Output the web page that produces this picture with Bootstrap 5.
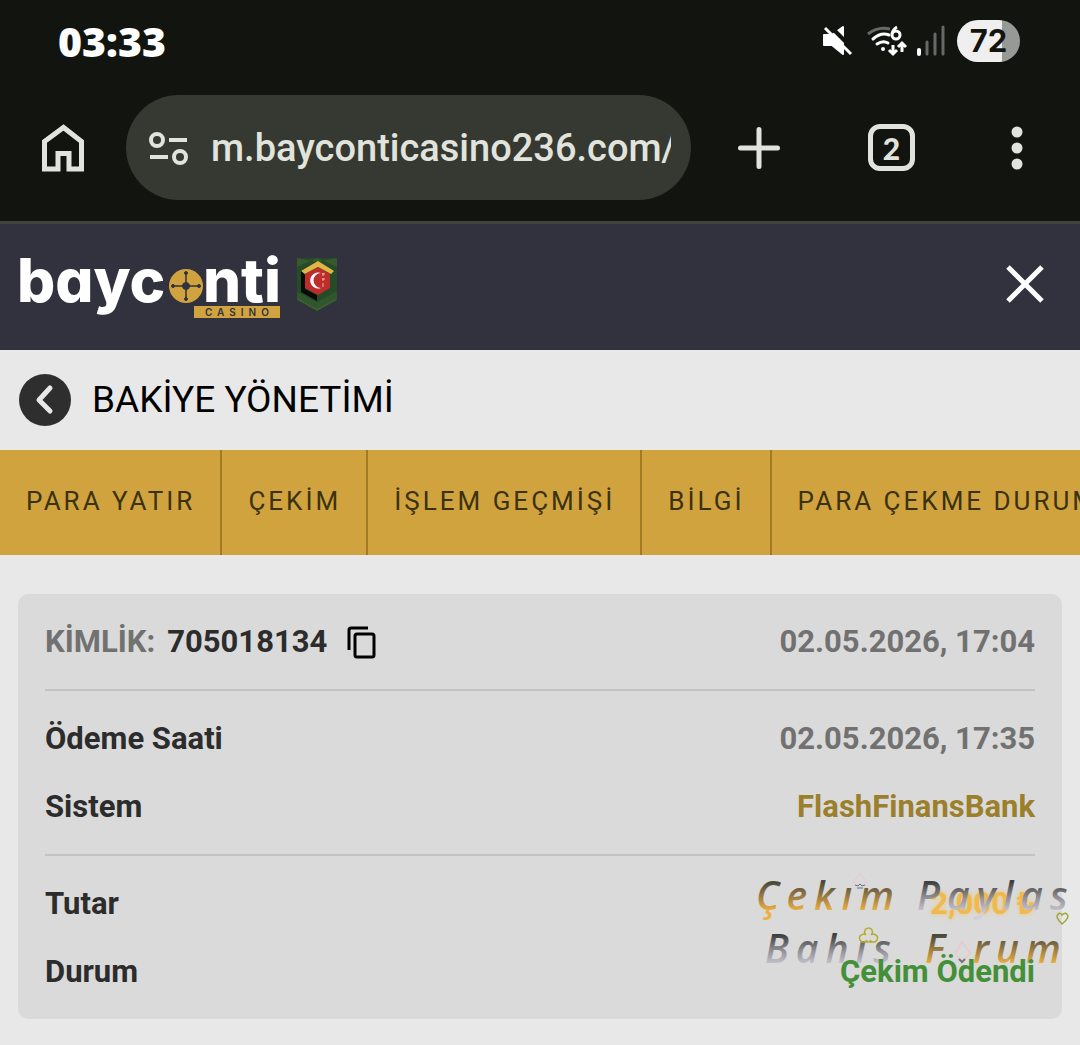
<!DOCTYPE html>
<html lang="tr">
<head>
<meta charset="utf-8">
<meta name="viewport" content="width=device-width, initial-scale=1">
<title>Bakiye Yönetimi</title>
<link href="https://cdn.jsdelivr.net/npm/bootstrap@5.3.0/dist/css/bootstrap.min.css" rel="stylesheet">
<style>
body { background: #e8e8e8; font-family: Roboto, "Noto Sans", sans-serif; color: #2c2c2c; overflow-x: hidden; }
svg { display: block; flex: none; }
.phone-top { background: #12150f; color: #e1e4dc; border-bottom: 3px solid #41433f; }
.status-line { height: 82px; padding: 0 60px 0 58px; color: #fff; }
.clock { font: 800 41px/48px "Open Sans", sans-serif; }
.battery { width: 63px; height: 42px; border-radius: 21px; background: linear-gradient(90deg, #efefef 72%, #979996 72%); color: #12150f; font: 700 31px/42px Inter, sans-serif; }
.browser-bar { padding: 13px 57px 21px 41px; }
.browser-bar .btn { flex: none; }
.address { height: 105px; border-radius: 53px; background: #363832; padding: 0 20px 0 22px; gap: 23px; margin: 0 46px 0 40px; min-width: 0; }
.address input { min-width: 0; flex: 1; background: none; border: 0; padding: 0; color: #e1e4dc; font-size: 38px; line-height: 48px; font-weight: 500; outline: 0; }
.tab-count, .tab-count:hover { width: 47px; height: 47px; border: 5px solid #e1e4dc; border-radius: 12px; color: #e1e4dc; font: 900 30px/36px Lato, sans-serif; margin: 0 96px 0 87px; }
.site-head { background: #31323e; height: 126px; padding: 0 36px 6px 15px; color: #fff; }
.page-title { height: 100px; padding: 0 19px; gap: 21px; }
.page-title h1 { font-size: 37px; line-height: 44px; font-weight: 400; color: #000; }
.money-tabs { background: #d1a33e; height: 105px; overflow: hidden; }
.money-tabs .nav-link { display: flex; align-items: center; white-space: nowrap; padding: 0 25px 3px 26px; border-right: 2px solid #a37a22; border-radius: 0; color: #3a3211; font-size: 26px; line-height: 32px; letter-spacing: 3px; }
.pay-card { margin: 39px 18px 26px; background: #dadada; border: 0; border-radius: 10px; padding: 0 27px; font-size: 31px; line-height: 36px; font-weight: 700; }
.pay-part { padding: 14px 0 13px; }
.pay-part + .pay-part { border-top: 2px solid #c3c3c3; }
.pay-line { height: 68px; }
.copy-btn { margin-left: 20px; }
.dim { color: #717171; }
.system-name { color: #9b7f2b; }
.amount { color: #efb94e; text-shadow: 0 0 4px #f2c766; }
.paid { color: #449039; }
.stamp { position: absolute; top: 277px; right: -18px; pointer-events: none; }
</style>
<script src="https://cdn.jsdelivr.net/npm/bootstrap@5.3.0/dist/js/bootstrap.bundle.min.js"></script>
</head>
<body>
<header class="phone-top">
  <div class="status-line d-flex align-items-center justify-content-between">
    <span class="clock">03:33</span>
    <div class="d-flex align-items-center">
      <svg width="135" height="42" viewBox="818 20 135 42" fill="none" aria-hidden="true">
        <path d="M824 35h8l11-8v27l-11-9h-8z" fill="#fff" stroke="#fff" stroke-width="2" stroke-linejoin="round"/>
        <path d="M828 24l26 26" stroke="#12150f" stroke-width="4"/>
        <path d="M825 28l26 26" stroke="#fff" stroke-width="3"/>
        <path d="M868 34q10-8 22-5" stroke="#666965" stroke-width="3"/>
        <path d="M873 39q8-7 16-4M877 44q6-4 11-1" stroke="#fff" stroke-width="3" stroke-linecap="round"/>
        <circle cx="883" cy="49" r="2" fill="#fff"/>
        <circle cx="896" cy="35" r="4" stroke="#fff" stroke-width="3"/>
        <path d="M892 34q1-5 5-7" stroke="#fff" stroke-width="3"/>
        <path d="M893 45v9m-4-4 4 4 4-4M902 52v-9m-4 4 4-4 4 4" stroke="#fff" stroke-width="3"/>
        <path d="M919 50v4" stroke="#fff" stroke-width="4" stroke-linecap="round"/>
        <path d="M927 42v12M935 34v20M943 27v27" stroke="#666965" stroke-width="3" stroke-linecap="round"/>
      </svg>
      <span class="battery text-center ms-1">72</span>
    </div>
  </div>
  <div class="browser-bar d-flex align-items-center">
    <button class="btn p-0 border-0" aria-label="Ana sayfa"><svg width="45" height="48" viewBox="0 0 45 48" fill="none" stroke="#e1e4dc" stroke-width="5"><path d="M3.500 45V17.500L22.500 3.500l18 14V45H28V29.500H17V45z"/></svg></button>
    <div class="address d-flex align-items-center flex-grow-1">
      <svg width="40" height="36" viewBox="0 0 40 36" fill="none" stroke="#e1e4dc" stroke-width="4"><circle cx="9" cy="10" r="6"/><path d="M21 10h18M2 27h18"/><circle cx="32" cy="27" r="6"/></svg>
      <input type="text" aria-label="Adres" value="m.bayconticasino236.com/" spellcheck="false">
    </div>
    <button class="btn p-0 border-0" aria-label="Yeni sekme"><svg width="44" height="44" viewBox="0 0 44 44" stroke="#e1e4dc" stroke-width="5" stroke-linecap="round"><path d="M22 3.500v37M3.500 22h37"/></svg></button>
    <button class="btn p-0 tab-count" aria-label="Sekmeler">2</button>
    <button class="btn p-0 border-0" aria-label="Menü"><svg width="12" height="44" viewBox="0 0 12 44" fill="#e1e4dc"><circle cx="6" cy="6" r="5.500"/><circle cx="6" cy="22" r="5.500"/><circle cx="6" cy="38" r="5.500"/></svg></button>
  </div>
</header>

<div class="site-head d-flex align-items-center justify-content-between">
  <a href="#" aria-label="Bayconti Casino">
    <svg width="325" height="84" viewBox="15 242 325 84" font-family="Inter, sans-serif">
      <g fill="#fff" font-size="60" font-weight="800" style="font-feature-settings:'cv11'"><text x="17" y="302">bayc</text><text x="203" y="302">nti</text></g>
      <circle cx="186" cy="286" r="17" fill="#d1a33e"/>
      <g stroke="#31323e" fill="#31323e"><path d="M172 286h28M186 272v28" stroke-width="1.500"/><circle cx="186" cy="286" r="3.500"/><circle cx="173" cy="286" r="1.500"/><circle cx="199" cy="286" r="1.500"/><circle cx="186" cy="273" r="1.500"/><circle cx="186" cy="299" r="1.500"/></g>
      <path d="M194 306h86v12h-86z" fill="#d1a33e"/>
      <text x="205" y="316" font-size="10" font-weight="600" letter-spacing="5" fill="#31323e">CASINO</text>
      <path d="M297 258h40v42l-19 11-21-12z" fill="#254b27"/>
      <path d="M297 258l20 4 20-4v9l-20-9-20 9z" fill="#36592e"/>
      <path d="M301 271l17-10 16 10-3 3-13-7-13 7z" fill="#dfb744"/>
      <path d="M301 271l4 4v14l12 6v6l-16-9z" fill="#080c08"/>
      <path d="M305 274l13-7 12 7v14l-12 7-13-7z" fill="#bd2d2b"/>
      <path d="M321 273a8 8 0 1 0 0 15 7 7 0 1 1 0-15" fill="#fff"/>
      <path d="M323 273v3m-1-2h3m-2 4v3m-1-2h3m-2 4v4" stroke="#f3b4a5"/>
      <path d="M297 292l20 10v9l-20-11zM317 302l20-11v9l-20 11z" fill="#31552d"/>
      <path d="M298 299l19 11 19-11" stroke="#587843" fill="none" stroke-dasharray="1 1"/>
    </svg>
  </a>
  <button class="btn p-0 border-0" aria-label="Kapat"><svg width="38" height="38" viewBox="0 0 38 38" stroke="#fff" stroke-width="5"><path d="M2 2l34 34M36 2L2 36"/></svg></button>
</div>

<main>
  <div class="page-title d-flex align-items-center">
    <button class="btn p-0 border-0" aria-label="Geri"><svg width="52" height="52" viewBox="0 0 52 52" fill="none"><circle cx="26" cy="26" r="26" fill="#2e2e2e"/><path d="M31 14L20 26l11 11" stroke="#e8e8e8" stroke-width="5" stroke-linecap="round" stroke-linejoin="round"/></svg></button>
    <h1 class="m-0">BAKİYE YÖNETİMİ</h1>
  </div>
  <nav class="money-tabs nav flex-nowrap">
    <a class="nav-link" href="#">PARA YATIR</a>
    <a class="nav-link" href="#">ÇEKİM</a>
    <a class="nav-link" href="#">İŞLEM GEÇMİŞİ</a>
    <a class="nav-link" href="#">BİLGİ</a>
    <a class="nav-link" href="#">PARA ÇEKME DURUMU</a>
  </nav>
  <section class="card pay-card">
    <div class="pay-part">
      <div class="pay-line d-flex align-items-center justify-content-between">
        <div class="d-flex align-items-center"><span class="dim">KİMLİK:</span><span class="ms-2 ps-1">705018134</span>
          <button class="btn p-0 border-0 copy-btn" aria-label="Kopyala"><svg width="30" height="34" viewBox="0 0 30 34" fill="none" stroke="#000" stroke-width="3"><path d="M2 25V5q0-2 2-2h17"/><rect x="8" y="9" width="19" height="23" rx="2"/></svg></button>
        </div>
        <span class="dim">02.05.2026, 17:04</span>
      </div>
    </div>
    <div class="pay-part">
      <div class="pay-line d-flex align-items-center justify-content-between"><span>Ödeme Saati</span><span class="dim">02.05.2026, 17:35</span></div>
      <div class="pay-line d-flex align-items-center justify-content-between"><span>Sistem</span><span class="system-name">FlashFinansBank</span></div>
    </div>
    <div class="pay-part">
      <div class="pay-line d-flex align-items-center justify-content-between"><span>Tutar</span><span class="amount">2,000 ₺</span></div>
      <div class="pay-line d-flex align-items-center justify-content-between"><span>Durum</span><span class="paid position-relative z-1">Çekim Ödendi</span></div>
    </div>
    <div class="stamp">
      <svg width="328" height="108" viewBox="752 871 328 108" font-family="'Open Sans', sans-serif" font-size="39" font-style="italic" font-weight="600" letter-spacing="7">
        <defs>
          <linearGradient id="gold1" gradientUnits="userSpaceOnUse" x1="0" y1="882" x2="0" y2="914"><stop stop-color="#48483b"/><stop offset=".45" stop-color="#9a7b43"/><stop offset=".9" stop-color="#edb13f"/></linearGradient>
          <linearGradient id="gold2" href="#gold1" gradientTransform="translate(0 53)"/>
          <linearGradient id="steel1" gradientUnits="userSpaceOnUse" x1="0" y1="882" x2="0" y2="914"><stop stop-color="#3e3e3e"/><stop offset=".5" stop-color="#939196"/><stop offset="1" stop-color="#d3cfda"/></linearGradient>
          <linearGradient id="steel2" href="#steel1" gradientTransform="translate(0 53)"/>
        </defs>
        <text x="756" y="910" fill="url(#gold1)">Çekım</text>
        <text x="917" y="910" fill="url(#steel1)">Paylas</text>
        <text x="765" y="963" fill="url(#steel2)">Bahıs</text>
        <text x="925" y="963" fill="url(#gold2)">F</text>
        <text x="973" y="963" fill="url(#gold2)">rum</text>
        <g fill="none">
          <path d="M860 873q-5 6-6 10 2 3 5 1h2q4 2 5-1-1-4-6-10" stroke="#ecc8ca"/>
          <path d="M855 885l3 1 2-2 2 2 3-1M857 888h6" stroke="#60767a"/>
          <path d="M1062 924q-5-5-5-8 2-5 5-1 4-4 6 1 0 3-6 8z" stroke="#a4a532" stroke-width="1.500"/>
          <path d="M866 935a4 4 0 1 1 5 0 4 4 0 1 1-1 5l1 2h-5l1-2a4 4 0 1 1-1-5z" stroke="#b4ac31" stroke-width="1.500"/>
          <path d="M962 942l8 11-8 9-7-9z" stroke="#ecc8ca" stroke-width="1.500"/><path d="M959 959l3 3 3-3" stroke="#77777b" stroke-width="2"/>
        </g>
      </svg>
    </div>
  </section>
</main>
</body>
</html>
